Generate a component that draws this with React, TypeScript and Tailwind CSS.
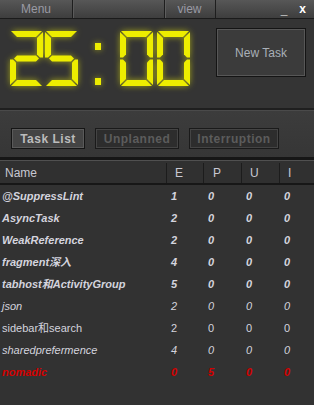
import React from "react";

type Pt = [number, number];

const W = 33;
const H = 55;
const T = 6;
const G = 1;

// seven segment polygons for one digit box
const SEGMENTS: Record<string, Pt[]> = {
  a: [[G, 0], [W - G, 0], [W - T - G, T], [T + G, T]],
  b: [[W, G], [W, H / 2 - G], [W - T / 2, H / 2 - G], [W - T, H / 2 - T / 2 - G], [W - T, T + G]],
  c: [[W, H / 2 + G], [W, H - G], [W - T, H - T - G], [W - T, H / 2 + T / 2 + G], [W - T / 2, H / 2 + G]],
  d: [[T + G, H - T], [W - T - G, H - T], [W - G, H], [G, H]],
  e: [[0, H / 2 + G], [T / 2, H / 2 + G], [T, H / 2 + T / 2 + G], [T, H - T - G], [0, H - G]],
  f: [[0, G], [T, T + G], [T, H / 2 - T / 2 - G], [T / 2, H / 2 - G], [0, H / 2 - G]],
  g: [[T / 2 + G, H / 2], [T + G, H / 2 - T / 2], [W - T - G, H / 2 - T / 2], [W - T / 2 - G, H / 2], [W - T - G, H / 2 + T / 2], [T + G, H / 2 + T / 2]],
};

const DIGITS: Record<string, string> = {
  "0": "abcdef",
  "1": "bc",
  "2": "abged",
  "3": "abgcd",
  "4": "fgbc",
  "5": "afgcd",
  "6": "afgedc",
  "7": "abc",
  "8": "abcdefg",
  "9": "abcdfg",
};

function Digit({ value, x }: { value: string; x: number }) {
  return (
    <g transform={`translate(${x} 0)`}>
      {DIGITS[value].split("").map((s) => (
        <polygon
          key={s}
          points={SEGMENTS[s].map((p) => p.join(",")).join(" ")}
        />
      ))}
    </g>
  );
}

function Clock({ time }: { time: string }) {
  return (
    <svg
      width="182"
      height="57"
      viewBox="0 -1 182 57"
      role="img"
      aria-label={time}
      className="drop-shadow-[0_0_3px_rgba(255,255,0,0.55)]"
    >
      <title>{time}</title>
      <g fill="#eded00">
        <Digit value={time[0]} x={0} />
        <Digit value={time[1]} x={35} />
        <rect x="85" y="12" width="6" height="7" />
        <rect x="85" y="47" width="6" height="7" />
        <Digit value={time[3]} x={110} />
        <Digit value={time[4]} x={147} />
      </g>
    </svg>
  );
}

const tasks = [
  { name: "@SuppressLint", e: 1, p: 0, u: 0, i: 0, style: "italic font-bold" },
  { name: "AsyncTask", e: 2, p: 0, u: 0, i: 0, style: "italic font-bold" },
  { name: "WeakReference", e: 2, p: 0, u: 0, i: 0, style: "italic font-bold" },
  { name: "fragment深入", e: 4, p: 0, u: 0, i: 0, style: "italic font-bold" },
  { name: "tabhost和ActivityGroup", e: 5, p: 0, u: 0, i: 0, style: "italic font-bold" },
  { name: "json", e: 2, p: 0, u: 0, i: 0, style: "italic" },
  { name: "sidebar和search", e: 2, p: 0, u: 0, i: 0, style: "" },
  { name: "sharedprefermence", e: 4, p: 0, u: 0, i: 0, style: "italic" },
  { name: "nomadic", e: 0, p: 5, u: 0, i: 0, style: "italic font-bold text-[#d40000]" },
];

export default function App() {
  return (
    <div className="w-[314px] h-[405px] overflow-hidden bg-[#323232] text-[11px] text-[#d4d4de] font-['Liberation_Sans','Noto_Sans_CJK_SC',sans-serif]">
      {/* title bar */}
      <div className="flex h-[19px] bg-gradient-to-b from-[#575757] to-[#3e3e3e] border-b border-[#1b1b1b] text-[12px] text-[#9a9aa4]">
        <div className="w-[73px] flex items-center justify-center border-r border-[#1e1e1e] shadow-[1px_0_0_#5a5a5a]">
          Menu
        </div>
        <div className="flex-1" />
        <div className="w-[52px] flex items-center justify-center border-x border-[#1e1e1e] shadow-[inset_1px_0_0_#5e5e5e]">
          view
        </div>
        <div className="flex-1 flex items-center justify-end gap-[12px] pr-[8px] text-white font-bold">
          <span className="leading-none mt-[2px]">_</span>
          <span className="leading-none">x</span>
        </div>
      </div>

      {/* clock panel */}
      <div className="flex h-[91px] bg-[#343434] border-b-[2px] border-[#1f1f1f]">
        <div className="pl-[10px] pt-[11px]">
          <Clock time="25:00" />
        </div>
        <div className="ml-auto mr-[8px] mt-[9px]">
          <button className="w-[90px] h-[49px] border border-[#141414] shadow-[inset_0_0_0_1px_#575757] bg-[#3b3b3b] text-[#a9b0b8] text-[12px]">
            New Task
          </button>
        </div>
      </div>

      {/* tabs */}
      <div className="flex items-start gap-[10px] h-[50px] pt-[17px] pl-[11px] bg-gradient-to-b from-[#3c3c3c] to-[#363636] border-t border-[#4a4a4a] border-b-[3px] border-b-[#161616] text-[12px]">
        <button className="w-[74px] h-[21px] border border-[#151515] shadow-[inset_0_0_0_1px_#5a5a5a] bg-[#444444] text-[#bcbcbc] font-bold tracking-[0.5px]">
          Task List
        </button>
        <button className="w-[84px] h-[21px] border border-[#1a1a1a] shadow-[inset_0_0_0_1px_#444444] bg-[#2d2d2d] text-[#5c5c5c] font-bold tracking-[0.5px]">
          Unplanned
        </button>
        <button className="w-[90px] h-[21px] border border-[#1a1a1a] shadow-[inset_0_0_0_1px_#444444] bg-[#2d2d2d] text-[#5c5c5c] font-bold tracking-[0.5px]">
          Interruption
        </button>
      </div>

      {/* table header */}
      <div className="flex h-[25px] pt-[2px] bg-[#303030] border-t border-[#505050] border-b-[2px] border-b-[#171717] text-[12px] text-[#c8c8d2]">
        <div className="w-[166px] pl-[5px] flex items-center">Name</div>
        <div className="w-[37px] pl-[8px] flex items-center border-l border-[#1c1c1c]">E</div>
        <div className="w-[38px] pl-[9px] flex items-center border-l border-[#1c1c1c]">P</div>
        <div className="w-[38px] pl-[8px] flex items-center border-l border-[#1c1c1c]">U</div>
        <div className="flex-1 pl-[8px] flex items-center border-l border-[#1c1c1c]">I</div>
      </div>

      {/* rows */}
      <div className="flex flex-col">
        {tasks.map((t) => (
          <div key={t.name} className={`flex h-[22px] items-center ${t.style}`}>
            <div className="w-[166px] pl-[2px] whitespace-nowrap">{t.name}</div>
            <div className="w-[37px] pl-[5px]">{t.e}</div>
            <div className="w-[38px] pl-[5px]">{t.p}</div>
            <div className="w-[38px] pl-[5px]">{t.u}</div>
            <div className="flex-1 pl-[5px]">{t.i}</div>
          </div>
        ))}
      </div>
    </div>
  );
}
